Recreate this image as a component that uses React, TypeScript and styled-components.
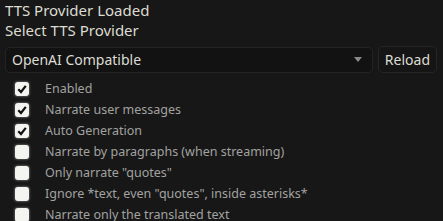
import React, { useState } from 'react'
import styled, { createGlobalStyle } from 'styled-components'

const GlobalStyle = createGlobalStyle`
  html, body {
    margin: 0;
    padding: 0;
    background: #171717;
  }
  body {
    font-family: "Noto Sans", "Open Sans", sans-serif;
    color: #dcdcd2;
  }
`

const Panel = styled.div`
  display: flex;
  flex-direction: column;
  padding: 0 6px 0 5px;
`

const Heading = styled.div`
  font-size: 15px;
  line-height: 20px;
  color: #dcdcd2;
`

const SelectRow = styled.div`
  display: flex;
  align-items: center;
  gap: 5px;
  margin-top: 6px;
`

const Select = styled.div`
  box-sizing: border-box;
  flex: 1;
  display: flex;
  align-items: center;
  justify-content: space-between;
  height: 26px;
  padding: 0 10px 0 6px;
  background: #121212;
  border: 1px solid #242424;
  border-radius: 5px;
  font-size: 14px;
  color: #dcdcd2;
`

const Caret = styled.span`
  width: 0;
  height: 0;
  border-left: 4px solid transparent;
  border-right: 4px solid transparent;
  border-top: 5px solid #8a8a8a;
`

const Button = styled.div`
  box-sizing: border-box;
  height: 27px;
  padding: 0 6px;
  display: flex;
  align-items: center;
  background: #151515;
  border: 1px solid #262626;
  border-radius: 5px;
  font-size: 14px;
  color: #dcdcd2;
`

const Options = styled.div`
  display: flex;
  flex-direction: column;
  margin-top: 5px;
  padding-left: 10px;
`

const Option = styled.label`
  display: flex;
  align-items: center;
  gap: 16px;
  height: 21px;
  font-size: 12.5px;
  color: #a2a2a0;
`

const Box = styled.span<{ $checked: boolean }>`
  width: 14px;
  height: 14px;
  border-radius: 3px;
  background: #f4f4f0;
  box-shadow: 0 0 2px 1px rgba(255, 255, 255, 0.25);
  display: flex;
  align-items: center;
  justify-content: center;
`

const options = [
  { label: 'Enabled', checked: true },
  { label: 'Narrate user messages', checked: true },
  { label: 'Auto Generation', checked: true },
  { label: 'Narrate by paragraphs (when streaming)', checked: false },
  { label: 'Only narrate "quotes"', checked: false },
  { label: 'Ignore *text, even "quotes", inside asterisks*', checked: false },
  { label: 'Narrate only the translated text', checked: false },
]

export default function App() {
  const [state, setState] = useState(options.map(o => o.checked))

  return (
    <Panel>
      <GlobalStyle />
      <Heading>TTS Provider Loaded</Heading>
      <Heading>Select TTS Provider</Heading>
      <SelectRow>
        <Select>
          <span>OpenAI Compatible</span>
          <Caret />
        </Select>
        <Button>Reload</Button>
      </SelectRow>
      <Options>
        {options.map((o, i) => (
          <Option key={i} onClick={() => setState(s => s.map((v, j) => (j === i ? !v : v)))}>
            <Box $checked={state[i]}>
              {state[i] && (
                <svg width="10" height="10" viewBox="0 0 10 10">
                  <path d="M1.3 5.2 L4 8 L8.8 1.8" fill="none" stroke="#111" strokeWidth="2.2" />
                </svg>
              )}
            </Box>
            {o.label}
          </Option>
        ))}
      </Options>
    </Panel>
  )
}
